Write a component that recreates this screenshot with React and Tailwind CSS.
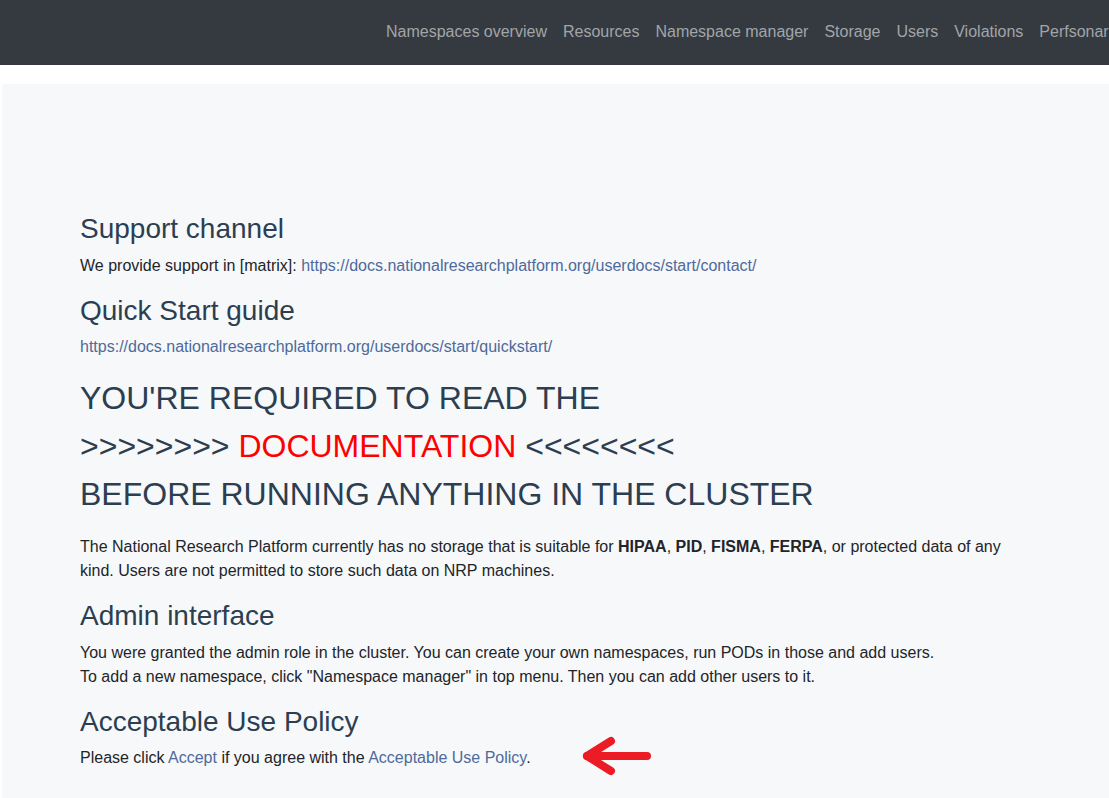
const NAV = [
  'Namespaces overview',
  'Resources',
  'Namespace manager',
  'Storage',
  'Users',
  'Violations',
  'Perfsonar',
]

const font = { fontFamily: '"Liberation Sans", Arial, sans-serif' }

function Arrow() {
  return (
    <svg width="80" height="44" viewBox="0 0 80 44" className="ml-[50px] -my-[10px]">
      <g stroke="#ec1c24" strokeWidth="8" strokeLinecap="round" strokeLinejoin="round" fill="none">
        <path d="M6 20 L66 20" />
        <path d="M30 5 L6 20 L30 35" />
      </g>
    </svg>
  )
}

export default function App() {
  return (
    <div className="min-h-[798px] overflow-hidden bg-white text-[16px] text-[#212529]" style={font}>
      <nav className="h-[65px] bg-[#343a40] flex items-center overflow-hidden whitespace-nowrap">
        <ul className="flex pl-[378px] pb-[2px]">
          {NAV.map((n) => (
            <li key={n} className="px-[8px] text-[16px] text-[#a2a5a8]">
              {n}
            </li>
          ))}
        </ul>
      </nav>

      <main className="mt-[19px] ml-[2px] rounded-tl-[4px] bg-[#f7f8fa] pt-[128px] pb-[40px] pl-[78px]">
        <div className="w-[940px]">
          <h3 className="text-[28px] leading-[1.2] mb-[8px] text-[#2c3e50]">Support channel</h3>
          <p className="leading-[24px] mb-[16px]">
            We provide support in [matrix]:{' '}
            <a className="text-[#4e6a9c]">https://docs.nationalresearchplatform.org/userdocs/start/contact/</a>
          </p>

          <h3 className="text-[28px] leading-[1.2] mb-[8px] text-[#2c3e50]">Quick Start guide</h3>
          <p className="leading-[24px] mb-[15px]">
            <a className="text-[#4e6a9c]">https://docs.nationalresearchplatform.org/userdocs/start/quickstart/</a>
          </p>

          <h2 className="text-[32px] leading-[48px] mb-[17px] text-[#2c3e50]">
            YOU'RE REQUIRED TO READ THE
            <br />
            &gt;&gt;&gt;&gt;&gt;&gt;&gt;&gt; <span className="text-[#ff0000]">DOCUMENTATION</span> &lt;&lt;&lt;&lt;&lt;&lt;&lt;&lt;
            <br />
            BEFORE RUNNING ANYTHING IN THE CLUSTER
          </h2>

          <p className="leading-[24px] mb-[16px]">
            The National Research Platform currently has no storage that is suitable for <b>HIPAA</b>,{' '}
            <b>PID</b>, <b>FISMA</b>, <b>FERPA</b>, or protected data of any kind. Users are not permitted to
            store such data on NRP machines.
          </p>

          <h3 className="text-[28px] leading-[1.2] mb-[8px] text-[#2c3e50]">Admin interface</h3>
          <p className="leading-[24px] mb-[16px]">
            You were granted the admin role in the cluster. You can create your own namespaces, run PODs in
            those and add users.
            <br />
            To add a new namespace, click "Namespace manager" in top menu. Then you can add other users to it.
          </p>

          <h3 className="text-[28px] leading-[1.2] mb-[8px] text-[#2c3e50]">Acceptable Use Policy</h3>
          <div className="flex items-center">
            <p className="leading-[24px]">
              Please click <a className="text-[#4e6a9c]">Accept</a> if you agree with the{' '}
              <a className="text-[#4e6a9c]">Acceptable Use Policy</a>.
            </p>
            <Arrow />
          </div>
        </div>
      </main>
    </div>
  )
}
